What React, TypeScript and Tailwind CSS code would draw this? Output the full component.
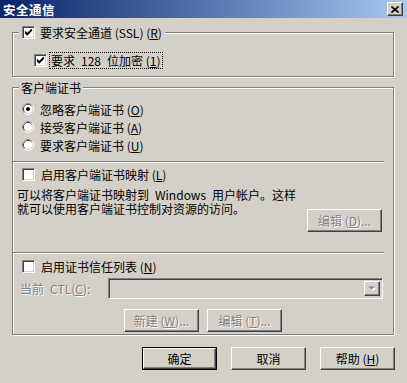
import React from 'react'

const FACE = "font-['Noto_Sans_CJK_SC','Noto_Sans',sans-serif]"
const DIS = 'text-[#808080] [text-shadow:1px_1px_0_#fff]'

// 经典 Windows 复选框
function Check({ checked }: { checked?: boolean }) {
  return (
    <span className="w-[13px] h-[13px] shrink-0 bg-white border border-t-[#808080] border-l-[#808080] border-b-white border-r-white shadow-[inset_1px_1px_0_#404040,inset_-1px_-1px_0_#D4D0C8] flex items-center justify-center">
      {checked && (
        <svg width="11" height="11" viewBox="0 0 11 11">
          <path d="M2 4.5 L4.2 6.7 L8.8 2.1 M2 5.8 L4.2 8 L8.8 3.4" stroke="#000" strokeWidth="1.2" fill="none" />
        </svg>
      )}
    </span>
  )
}

function Radio({ checked }: { checked?: boolean }) {
  return (
    <svg width="12" height="12" viewBox="0 0 12 12" className="shrink-0">
      <circle cx="6" cy="6" r="5.5" fill="none" stroke="#fff" />
      <path d="M2.11 9.89 A5.5 5.5 0 0 1 9.89 2.11" fill="none" stroke="#808080" />
      <circle cx="6" cy="6" r="4.5" fill="none" stroke="#D4D0C8" />
      <path d="M2.82 9.18 A4.5 4.5 0 0 1 9.18 2.82" fill="none" stroke="#404040" />
      <circle cx="6" cy="6" r="4" fill="#fff" />
      {checked && <circle cx="6" cy="6" r="2" fill="#000" />}
    </svg>
  )
}

function Btn({
  children,
  disabled,
  isDefault,
  className = '',
}: {
  children: React.ReactNode
  disabled?: boolean
  isDefault?: boolean
  className?: string
}) {
  const raised =
    'border border-t-white border-l-white border-b-[#404040] border-r-[#404040] shadow-[inset_-1px_-1px_0_#808080]'
  if (isDefault) {
    return (
      <div className={`w-[75px] h-[23px] border border-black flex ${className}`}>
        <div className={`flex-1 flex items-center justify-center ${raised}`}>{children}</div>
      </div>
    )
  }
  return (
    <div
      className={`w-[75px] h-[23px] flex items-center justify-center ${raised} ${disabled ? DIS : ''} ${className}`}
    >
      {children}
    </div>
  )
}

function Sep() {
  return <div className="h-[2px] border-t border-t-[#808080] border-b border-b-white mr-[9px]" />
}

export default function App() {
  return (
    <div
      className={`w-[407px] h-[383px] bg-[#D4D0C8] overflow-hidden flex flex-col text-[12px] leading-[13px] text-black ${FACE}`}
    >
      {/* 标题栏 */}
      <div className="h-[18px] shrink-0 bg-gradient-to-r from-[#0A246A] to-[#A6CAF0] flex items-center pl-[3px] pr-[4px]">
        <span className="text-white font-bold text-[12.5px] tracking-[0.5px]">安全通信</span>
        <div className="ml-auto w-[16px] h-[14px] bg-[#D4D0C8] border border-t-white border-l-white border-b-[#404040] border-r-[#404040] shadow-[inset_-1px_-1px_0_#808080] flex items-center justify-center">
          <svg width="8" height="7" viewBox="0 0 8 7">
            <path d="M0.5 0.5 L7.5 6.5 M7.5 0.5 L0.5 6.5" stroke="#000" strokeWidth="1.6" />
          </svg>
        </div>
      </div>

      <div className="flex flex-col pl-[12px] pr-[13px]">
        {/* 安全通道 */}
        <div className="relative mt-[14px] h-[45px] border border-[#808080] shadow-[inset_1px_1px_0_#fff,1px_1px_0_#fff]">
          <div className="absolute -top-[7px] left-[6px] px-[3px] bg-[#D4D0C8] flex items-center gap-[5px] h-[13px]">
            <Check checked />
            <span>
              要求安全通道 (SSL) (<u>R</u>)
            </span>
          </div>
          <div className="flex items-center gap-[3px] mt-[20px] pl-[21px]">
            <Check checked />
            <span className="outline outline-1 outline-dotted outline-black px-[1px] py-[1px] whitespace-nowrap">
              要求{'\u2002'}128{'\u2002'}位加密 (<u>1</u>)
            </span>
          </div>
        </div>

        {/* 客户端证书 */}
        <div className="relative mt-[10px] h-[248px] border border-[#808080] shadow-[inset_1px_1px_0_#fff,1px_1px_0_#fff] flex flex-col">
          <span className="absolute -top-[7px] left-[6px] px-[2px] bg-[#D4D0C8]">客户端证书</span>

          <div className="flex flex-col gap-[6px] mt-[15px] pl-[9px]">
            <div className="flex items-center gap-[6px] h-[12px]">
              <Radio checked />
              <span>
                忽略客户端证书 (<u>O</u>)
              </span>
            </div>
            <div className="flex items-center gap-[6px] h-[12px]">
              <Radio />
              <span>
                接受客户端证书 (<u>A</u>)
              </span>
            </div>
            <div className="flex items-center gap-[6px] h-[12px]">
              <Radio />
              <span>
                要求客户端证书 (<u>U</u>)
              </span>
            </div>
          </div>

          <div className="mt-[10px]">
            <Sep />
          </div>

          <div className="flex items-center gap-[6px] h-[13px] mt-[5px] pl-[9px]">
            <Check />
            <span>
              启用客户端证书映射 (<u>L</u>)
            </span>
          </div>

          <div className="flex justify-between mt-[7px] pl-[4px] pr-[11px]">
            <div className="flex flex-col leading-[14px] whitespace-nowrap">
              <span>可以将客户端证书映射到{'\u2002'}Windows{'\u2002'}用户帐户。这样</span>
              <span>就可以使用客户端证书控制对资源的访问。</span>
            </div>
            <Btn disabled className="mt-[21px]">
              编辑 (<u>D</u>)...
            </Btn>
          </div>

          <div className="mt-[20px]">
            <Sep />
          </div>

          <div className="flex items-center gap-[6px] h-[13px] mt-[6px] pl-[9px]">
            <Check />
            <span>
              启用证书信任列表 (<u>N</u>)
            </span>
          </div>

          <div className="flex items-center mt-[5px] pl-[7px] pr-[10px]">
            <span className={`w-[88px] ${DIS}`}>
              当前{'\u2002'}CTL(<u>C</u>):
            </span>
            <div className="flex-1 h-[21px] border border-t-[#808080] border-l-[#808080] border-b-white border-r-white shadow-[inset_1px_1px_0_#404040,inset_-1px_-1px_0_#D4D0C8] flex justify-end p-[2px]">
              <div className="w-[16px] h-[15px] border border-t-white border-l-white border-b-[#404040] border-r-[#404040] shadow-[inset_-1px_-1px_0_#808080] flex items-center justify-center">
                <svg width="8" height="5" viewBox="0 0 8 5">
                  <path d="M1 1 L7 1 L4 4 Z" fill="#fff" transform="translate(1 1)" />
                  <path d="M0.5 0.5 L6.5 0.5 L3.5 3.5 Z" fill="#808080" />
                </svg>
              </div>
            </div>
          </div>

          <div className="flex gap-[8px] mt-[10px] pl-[111px]">
            <Btn disabled>
              新建 (<u>W</u>)...
            </Btn>
            <Btn disabled>
              编辑 (<u>T</u>)...
            </Btn>
          </div>
        </div>

        {/* 底部按钮 */}
        <div className="flex justify-end gap-[14px] mt-[12px] -mr-[1px]">
          <Btn isDefault>确定</Btn>
          <Btn>取消</Btn>
          <Btn>
            帮助 (<u>H</u>)
          </Btn>
        </div>
      </div>
    </div>
  )
}
